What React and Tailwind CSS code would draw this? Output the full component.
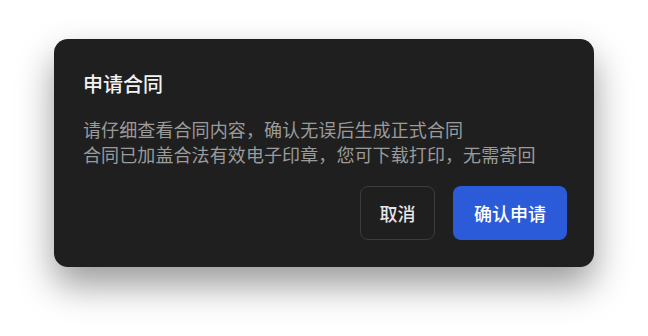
import React from 'react';

const ContractDialog = () => {
  return (
    <div className="min-h-screen w-full bg-white flex items-start justify-center pt-[39px]" style={{ fontFamily: '"Noto Sans CJK SC", "Noto Sans", sans-serif' }}>
      <div className="w-[540px] rounded-[14px] bg-[#1f1f1f] pl-[29px] pr-[27px] pt-[28px] pb-[27px] shadow-[0_18px_36px_rgba(0,0,0,0.4)]">
        {/* Title */}
        <h2 className="text-[20px] leading-[34px] font-medium text-[#f2f2f2]">申请合同</h2>

        {/* Body */}
        <div className="mt-[16px] text-[18px] leading-[25px] tracking-[0.1px] text-[#9b9b9b]">
          <p>请仔细查看合同内容，确认无误后生成正式合同</p>
          <p>合同已加盖合法有效电子印章，您可下载打印，无需寄回</p>
        </div>

        {/* Actions */}
        <div className="mt-[19px] flex justify-end gap-[18px]">
          <button className="h-[54px] w-[75px] rounded-[8px] border border-[#3c3c3c] bg-transparent text-[18px] font-medium text-[#e6e6e6]">
            取消
          </button>
          <button className="h-[54px] w-[114px] rounded-[8px] bg-[#2b5bd8] text-[18px] font-medium text-white">
            确认申请
          </button>
        </div>
      </div>
    </div>
  );
};

export default function App() {
  return <ContractDialog />;
}
